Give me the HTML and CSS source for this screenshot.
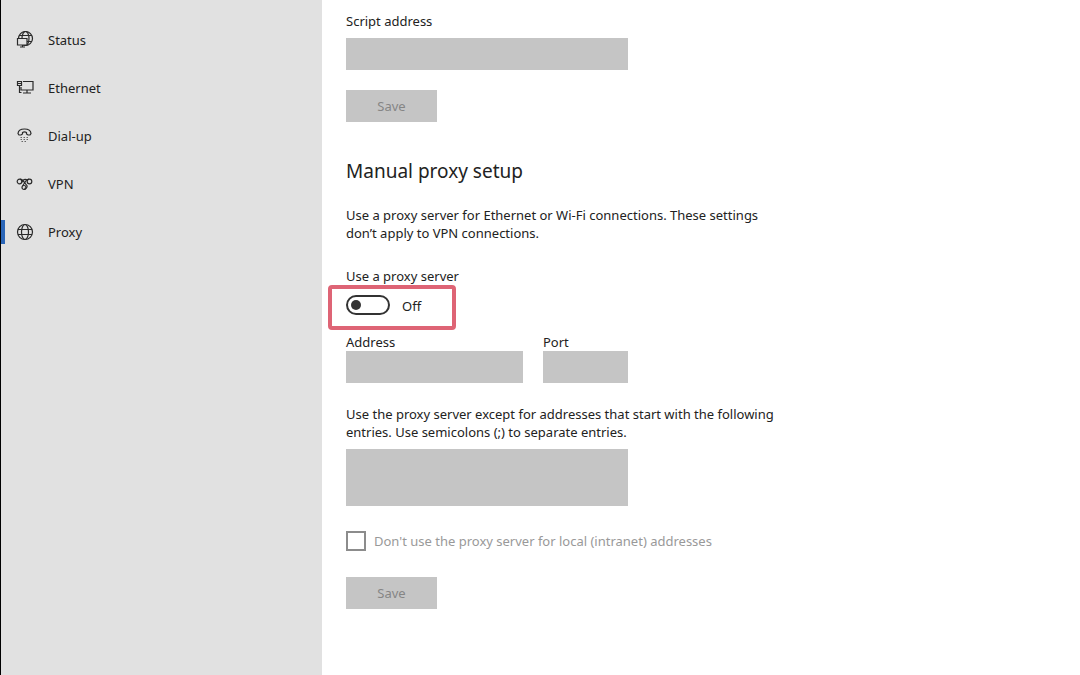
FILE: index.html
```html
<!DOCTYPE html>
<html lang="en">
<head>
    <meta charset="UTF-8">
    <meta name="viewport" content="width=device-width, initial-scale=1.0">
    <title>Proxy settings</title>
    <link rel="stylesheet" href="styles.css">
</head>
<body>
    <nav class="sidebar">
        <a class="nav-item" href="#status">
            <svg class="nav-icon" viewBox="0 0 18 18">
                <circle cx="9.5" cy="7.5" r="7"/>
                <ellipse cx="9.5" cy="7.5" rx="3.5" ry="7"/>
                <path d="M3 4.5h13M3 10.5h13"/>
                <path class="cover" d="M1.5 7.5h9.500v6.500H1.500z"/>
                <path d="M6.500 14v2M4 16h5"/>
            </svg>
            <span>Status</span>
        </a>
        <a class="nav-item" href="#ethernet">
            <svg class="nav-icon" viewBox="0 0 18 18">
                <path d="M7 2.500h10v8.500H5V8M11 11v3M7 14h8"/>
                <path d="M1.500 2.500h4v4h-4zM1.500 4.500h4M3.500 6.500v7h2"/>
            </svg>
            <span>Ethernet</span>
        </a>
        <a class="nav-item" href="#dialup">
            <svg class="nav-icon" viewBox="0 0 18 18">
                <path d="M2 6.500C2.500.5 14.500.5 15 6.500L14 8h-2l-1.500-1V5.500c-1-.6-3-.6-4 0V7L5 8H3z"/>
                <path class="dots" d="M4.500 10.500h8M4.500 12.500h8M5.500 14.500h6"/>
            </svg>
            <span>Dial-up</span>
        </a>
        <a class="nav-item" href="#vpn">
            <svg class="nav-icon" viewBox="0 0 18 18">
                <circle cx="3.500" cy="6.500" r="2.300"/>
                <circle cx="13.500" cy="6.500" r="2.300"/>
                <circle cx="8" cy="12.500" r="2"/>
                <path d="M4 4.200c3 0 3 2 5 4l2 2.500c.6 2-1 3-2.500 2.500M13 4.200c-3-.2-3 2-4.500 3.800L6.500 11M6 7.500c0-3 4-4 5-2"/>
            </svg>
            <span>VPN</span>
        </a>
        <a class="nav-item active" href="#proxy" aria-current="page">
            <svg class="nav-icon" viewBox="0 0 18 18">
                <circle cx="9" cy="9" r="7.5"/>
                <ellipse cx="9" cy="9" rx="3.5" ry="7.5"/>
                <path d="M2 6.5h14M2 11.5h14"/>
            </svg>
            <span>Proxy</span>
        </a>
    </nav>

    <main class="content">
        <form class="script-form">
            <label for="script">Script address</label>
            <input class="field script-field" type="text" id="script" disabled>
            <button class="save-btn" type="button" disabled>Save</button>
        </form>

        <h2>Manual proxy setup</h2>
        <form class="proxy-form">
            <p class="intro">Use a proxy server for Ethernet or Wi-Fi connections. These settings don’t apply to VPN connections.</p>

            <label for="use-proxy">Use a proxy server</label>
            <div class="toggle-box">
                <input class="toggle" type="checkbox" role="switch" id="use-proxy">
                <span>Off</span>
            </div>

            <div class="address-row">
                <div class="address-col">
                    <label for="address">Address</label>
                    <input class="field" type="text" id="address" disabled>
                </div>
                <div class="port-col">
                    <label for="port">Port</label>
                    <input class="field" type="text" id="port" disabled>
                </div>
            </div>

            <label class="except-label" for="exceptions">Use the proxy server except for addresses that start with the following entries. Use semicolons (;) to separate entries.</label>
            <textarea class="field exceptions" id="exceptions" disabled></textarea>

            <div class="local-row">
                <input class="check" type="checkbox" id="local" disabled>
                <label for="local">Don't use the proxy server for local (intranet) addresses</label>
            </div>
            <button class="save-btn" type="button" disabled>Save</button>
        </form>
    </main>
</body>
</html>
```
FILE: styles.css
```css
* {
    box-sizing: border-box;
}

body {
    display: flex;
    min-height: 100vh;
    margin: 0;
    background-color: #fff;
    color: #222;
    font-family: "Noto Sans", "Open Sans", sans-serif;
    font-size: 13px;
    line-height: 18px;
}

/* Sidebar */
.sidebar {
    flex: 0 0 322px;
    padding-top: 16px;
    border-left: 1px solid #000;
    background-color: #e1e1e1;
}

.nav-item {
    display: flex;
    align-items: center;
    gap: 14px;
    height: 48px;
    padding-left: 15px;
    color: #222;
    text-decoration: none;
}

.nav-item.active {
    background: linear-gradient(#2b66b8, #2b66b8) left center / 4px 24px no-repeat;
}

.nav-icon {
    width: 18px;
    height: 18px;
    fill: none;
    stroke: #2a2a2a;
    stroke-width: 1.2;
}

.nav-icon .cover {
    fill: #e1e1e1;
}

.nav-icon .dots {
    stroke-dasharray: 1.5 1.5;
    stroke: #666;
}

/* Content */
.content {
    flex: 1;
    padding: 12px 24px;
}

.script-form,
.proxy-form {
    display: flex;
    flex-direction: column;
    align-items: flex-start;
    max-width: 440px;
}

h2 {
    margin: 35px 0 21px;
    font-size: 19px;
    font-weight: 400;
    line-height: 28px;
}

.field {
    display: block;
    width: 100%;
    height: 32px;
    margin: 0;
    padding: 4px 8px;
    border: 0;
    border-radius: 0;
    background-color: #c5c5c5;
    font: inherit;
    resize: none;
}

.script-field {
    max-width: 282px;
    margin: 8px 0 20px;
}

.save-btn {
    width: 91px;
    height: 32px;
    padding: 0;
    border: 0;
    background-color: #c5c5c5;
    color: #858585;
    font: inherit;
}

.intro {
    margin: 0 0 25px;
}

/* Switch */
.toggle-box {
    display: flex;
    gap: 12px;
    width: 128px;
    height: 45px;
    margin: 0 0 3px -18px;
    padding: 6px 14px;
    border: 4px solid #de6475;
    border-radius: 4px;
}

.toggle-box span {
    line-height: 22px;
}

.toggle {
    appearance: none;
    display: flex;
    align-items: center;
    width: 44px;
    height: 20px;
    margin: 0;
    padding: 0 3px;
    border: 2px solid #333;
    border-radius: 10px;
}

.toggle::before {
    content: "";
    width: 10px;
    height: 10px;
    border-radius: 50%;
    background-color: #333;
}

.toggle:checked {
    justify-content: flex-end;
}

.address-row {
    display: flex;
    gap: 20px;
    width: 100%;
    max-width: 282px;
    margin-bottom: 22px;
}

.address-col {
    flex: 1;
}

.port-col {
    flex: 0 0 85px;
}

.address-row label {
    display: block;
}

.exceptions {
    max-width: 282px;
    height: 57px;
    margin: 8px 0 25px;
}

.local-row {
    display: flex;
    align-items: center;
    gap: 8px;
    margin-bottom: 26px;
    color: #999;
}

.check {
    appearance: none;
    width: 20px;
    height: 20px;
    margin: 0;
    border: 2px solid #8c8c8c;
    background-color: #fff;
}
```
